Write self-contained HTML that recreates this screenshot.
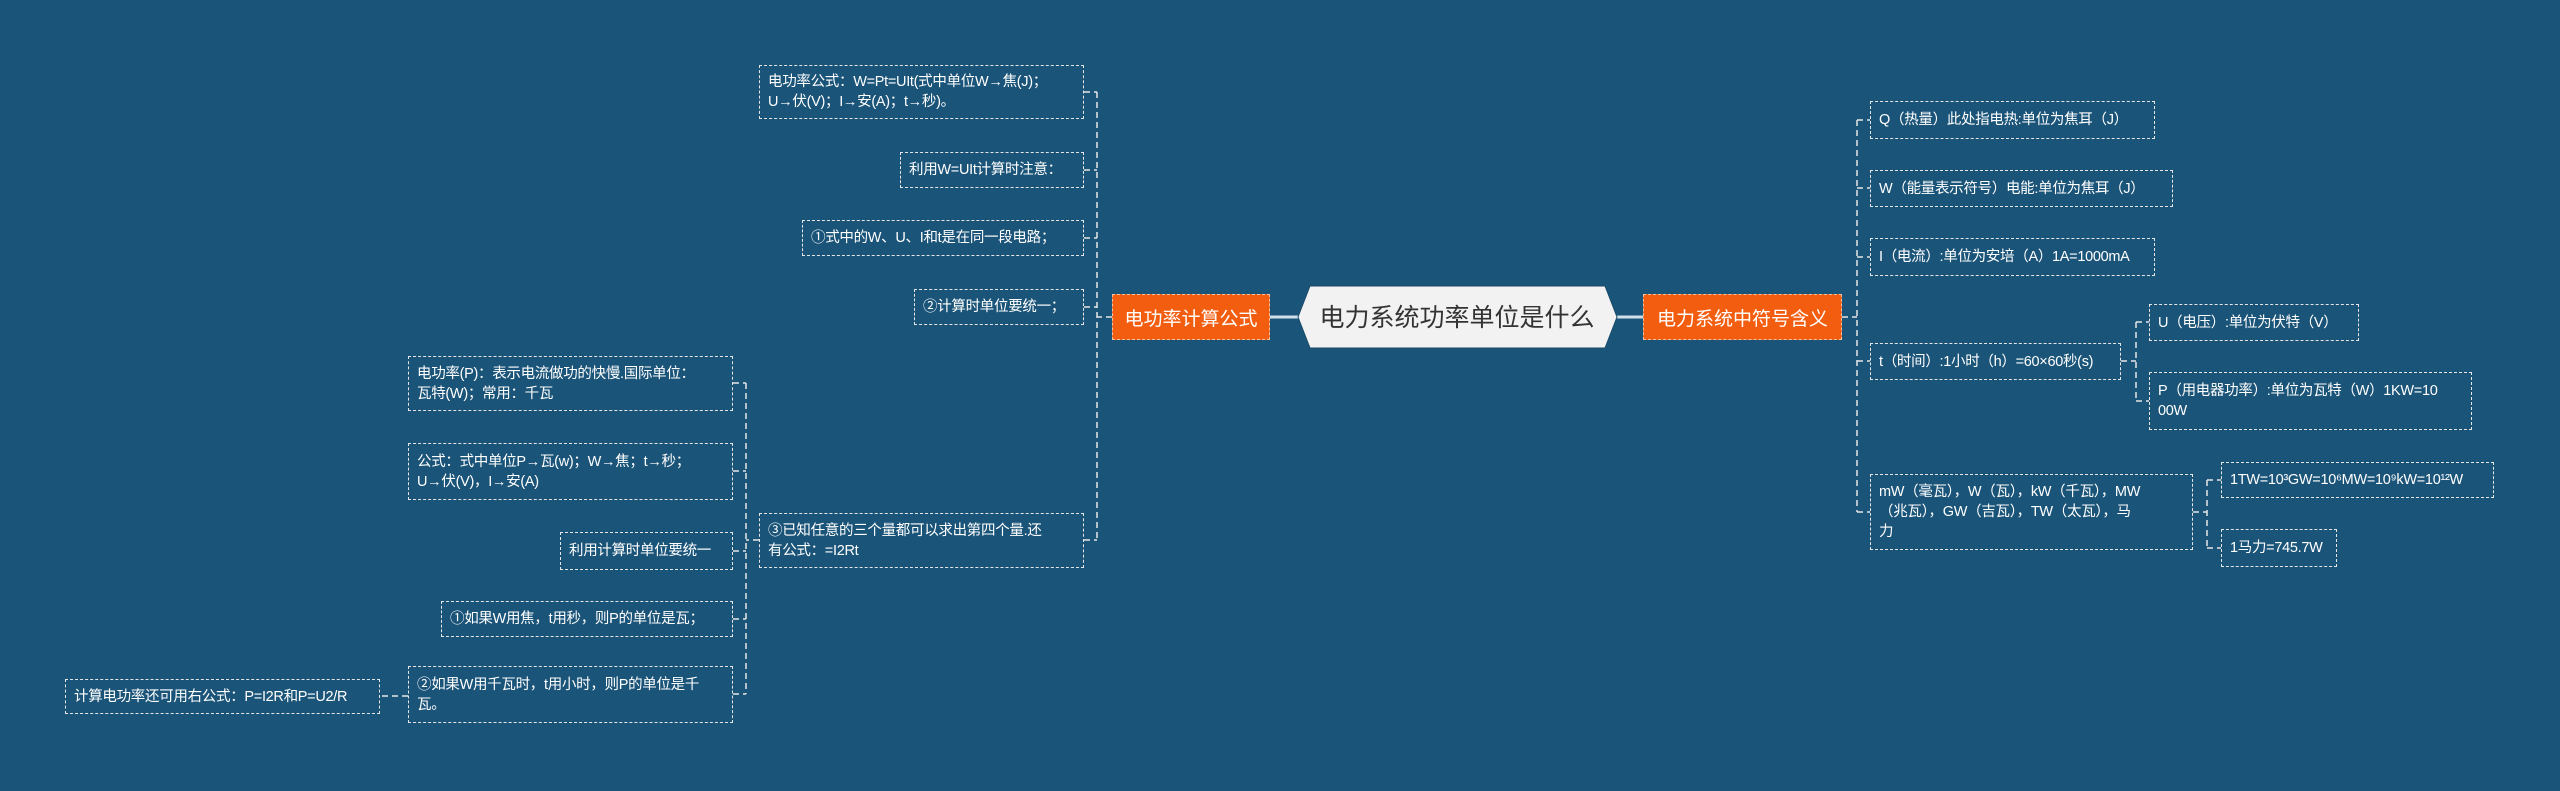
<!DOCTYPE html>
<html><head><meta charset="utf-8"><style>
body{margin:0;width:2560px;height:791px;background:#1b5479;position:relative;overflow:hidden;font-family:"Liberation Sans","Noto Sans CJK SC",sans-serif}
.b{position:absolute;box-sizing:border-box;border:1.5px dashed #e6e6e6;color:#fff;font-size:14.5px;line-height:20px;padding:0 8px;display:flex;align-items:center;white-space:nowrap;overflow:hidden;letter-spacing:-0.3px}
.o{position:absolute;box-sizing:border-box;background:#f25d0f;border:1.5px dashed #f3c2a5;color:#fff;font-size:19px;display:flex;align-items:center;justify-content:center}
svg{position:absolute;left:0;top:0}
</style></head><body>
<svg width="2560" height="791">
<g stroke="#e6e6e6" stroke-width="1.5" stroke-dasharray="6,4" fill="none">
<path d="M1112 317H1097M1097 92V540M1084 92H1097M1084 170H1097M1084 238H1097M1084 307H1097M1084 540H1097"/>
<path d="M759 540H746M746 383V694M733 383H746M733 471H746M733 551H746M733 619H746M733 694H746"/>
<path d="M408 696H380"/>
<path d="M1842 317H1857M1857 120V512M1857 120H1870M1857 188H1870M1857 257H1870M1857 361H1870M1857 512H1870"/>
<path d="M2121 361H2136M2136 322V401M2136 322H2149M2136 401H2149"/>
<path d="M2193 512H2207M2207 480V548M2207 480H2221M2207 548H2221"/>
</g>
<path d="M1270 317H1298M1617 317H1643" stroke="#cfe0ea" stroke-width="3"/>
<polygon points="1310,286 1605,286 1617,317 1605,348 1310,348 1298,317" fill="#f2f2f2" stroke="#1a4a6a" stroke-width="1"/>
<text x="1457" y="326" text-anchor="middle" font-size="25" fill="#333" font-family="Liberation Sans, Noto Sans CJK SC, sans-serif">电力系统功率单位是什么</text>
</svg>
<div class="o" style="left:1112px;top:294px;width:158px;height:46px">电功率计算公式</div>
<div class="o" style="left:1643px;top:294px;width:199px;height:46px">电力系统中符号含义</div>

<div class="b" style="left:759px;top:65px;width:325px;height:54px">电功率公式：W=Pt=UIt(式中单位W→焦(J)；<br>U→伏(V)；I→安(A)；t→秒)。</div>
<div class="b" style="left:900px;top:152px;width:184px;height:36px">利用W=UIt计算时注意：</div>
<div class="b" style="left:802px;top:220px;width:282px;height:36px">①式中的W、U、I和t是在同一段电路；</div>
<div class="b" style="left:914px;top:289px;width:170px;height:36px">②计算时单位要统一；</div>
<div class="b" style="left:759px;top:513px;width:325px;height:55px">③已知任意的三个量都可以求出第四个量.还<br>有公式：=I2Rt</div>

<div class="b" style="left:408px;top:356px;width:325px;height:55px">电功率(P)：表示电流做功的快慢.国际单位：<br>瓦特(W)；常用：千瓦</div>
<div class="b" style="left:408px;top:443px;width:325px;height:57px">公式：式中单位P→瓦(w)；W→焦；t→秒；<br>U→伏(V)，I→安(A)</div>
<div class="b" style="left:560px;top:532px;width:173px;height:38px">利用计算时单位要统一</div>
<div class="b" style="left:441px;top:601px;width:292px;height:36px">①如果W用焦，t用秒，则P的单位是瓦；</div>
<div class="b" style="left:408px;top:666px;width:325px;height:57px">②如果W用千瓦时，t用小时，则P的单位是千<br>瓦。</div>
<div class="b" style="left:65px;top:679px;width:315px;height:35px">计算电功率还可用右公式：P=I2R和P=U2/R</div>

<div class="b" style="left:1870px;top:101px;width:285px;height:38px">Q（热量）此处指电热:单位为焦耳（J）</div>
<div class="b" style="left:1870px;top:170px;width:303px;height:37px">W（能量表示符号）电能:单位为焦耳（J）</div>
<div class="b" style="left:1870px;top:238px;width:285px;height:38px">I（电流）:单位为安培（A）1A=1000mA</div>
<div class="b" style="left:1870px;top:343px;width:251px;height:37px">t（时间）:1小时（h）=60×60秒(s)</div>
<div class="b" style="left:2149px;top:304px;width:210px;height:37px">U（电压）:单位为伏特（V）</div>
<div class="b" style="left:2149px;top:372px;width:323px;height:58px">P（用电器功率）:单位为瓦特（W）1KW=10<br>00W</div>
<div class="b" style="left:1870px;top:474px;width:323px;height:76px">mW（毫瓦），W（瓦），kW（千瓦），MW<br>（兆瓦），GW（吉瓦），TW（太瓦），马<br>力</div>
<div class="b" style="left:2221px;top:462px;width:273px;height:36px">1TW=10³GW=10⁶MW=10⁹kW=10¹²W</div>
<div class="b" style="left:2221px;top:529px;width:116px;height:38px">1马力=745.7W</div>
</body></html>
